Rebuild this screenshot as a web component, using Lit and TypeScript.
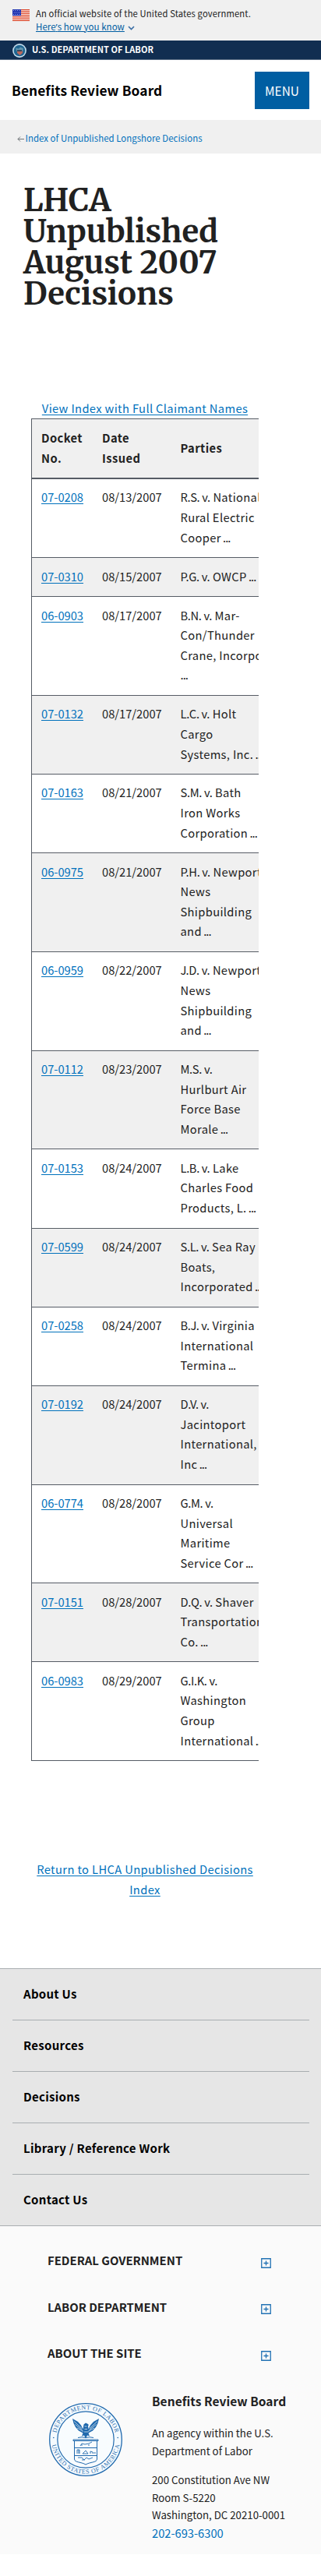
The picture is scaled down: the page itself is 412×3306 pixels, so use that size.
import { LitElement, html, css, svg } from "lit";

interface Decision {
  docket: string;
  issued: string;
  parties: string[];
}

const DECISIONS: Decision[] = [
  { docket: "07-0208", issued: "08/13/2007", parties: ["R.S. v. National", "Rural Electric", "Cooper ..."] },
  { docket: "07-0310", issued: "08/15/2007", parties: ["P.G. v. OWCP ..."] },
  { docket: "06-0903", issued: "08/17/2007", parties: ["B.N. v. Mar-", "Con/Thunder", "Crane, Incorpo", "..."] },
  { docket: "07-0132", issued: "08/17/2007", parties: ["L.C. v. Holt", "Cargo", "Systems, Inc. ..."] },
  { docket: "07-0163", issued: "08/21/2007", parties: ["S.M. v. Bath", "Iron Works", "Corporation ..."] },
  { docket: "06-0975", issued: "08/21/2007", parties: ["P.H. v. Newport", "News", "Shipbuilding", "and ..."] },
  { docket: "06-0959", issued: "08/22/2007", parties: ["J.D. v. Newport", "News", "Shipbuilding", "and ..."] },
  { docket: "07-0112", issued: "08/23/2007", parties: ["M.S. v.", "Hurlburt Air", "Force Base", "Morale ..."] },
  { docket: "07-0153", issued: "08/24/2007", parties: ["L.B. v. Lake", "Charles Food", "Products, L. ..."] },
  { docket: "07-0599", issued: "08/24/2007", parties: ["S.L. v. Sea Ray", "Boats,", "Incorporated ..."] },
  { docket: "07-0258", issued: "08/24/2007", parties: ["B.J. v. Virginia", "International", "Termina ..."] },
  { docket: "07-0192", issued: "08/24/2007", parties: ["D.V. v.", "Jacintoport", "International,", "Inc ..."] },
  { docket: "06-0774", issued: "08/28/2007", parties: ["G.M. v.", "Universal", "Maritime", "Service Cor ..."] },
  { docket: "07-0151", issued: "08/28/2007", parties: ["D.Q. v. Shaver", "Transportation", "Co. ..."] },
  { docket: "06-0983", issued: "08/29/2007", parties: ["G.I.K. v.", "Washington", "Group", "International ..."] },
];

const NAV = ["About Us", "Resources", "Decisions", "Library / Reference Work", "Contact Us"];
const GROUPS = ["FEDERAL GOVERNMENT", "LABOR DEPARTMENT", "ABOUT THE SITE"];

class AppRoot extends LitElement {
  static styles = css`
    :host { display: block; background: #fff; color: #212121; overflow: hidden;
      font-family: "Noto Sans CJK SC", "Noto Sans", sans-serif; font-size: 14.7px; line-height: 25.6px; }
    * { box-sizing: border-box; }
    a { color: #0071bc; text-decoration: underline; text-decoration-thickness: 1px; text-underline-offset: 2px; }
    .banner { background: #f0f0f0; height: 52px; padding: 8.6px 16px 0; display: flex; gap: 8px; font-size: 11.2px; line-height: 17px; letter-spacing: .14px; }
    .flag { width: 22px; height: 15px; margin-top: 3.4px; display: block; }
    .know { font-size: 11.5px; letter-spacing: .04px; text-underline-offset: 1px; color: #005ea2; }
    .apos { font-family: "Noto Sans", sans-serif; }
    .chev { width: 9px; height: 6px; margin-left: 4px; }
    .dol { background: #112e51; height: 25px; border-bottom: 1px solid #5d6f86; padding: 0 16px; display: flex; align-items: center; gap: 7px; color: #fff; font-weight: 700; font-size: 11px; line-height: 22px; letter-spacing: .04px; }
    .dol span { padding-bottom: 2px; }
    .dol svg { width: 18px; height: 18px; margin-top: 1px; }
    .head { height: 77px; padding: 0 15px 0 15px; display: flex; align-items: center; justify-content: space-between; color: #000; font-weight: 700; font-size: 17.3px; letter-spacing: .13px; }
    .menu { width: 70px; height: 48px; border: 0; padding: 0; background: #005ea2; color: #fff; font: 400 15.4px/46px "Noto Sans CJK SC", sans-serif; }
    .crumb { background: #f0f0f0; height: 43px; padding: 13.4px 22px 0; display: flex; gap: 1.5px; align-items: flex-start; font-size: 11.4px; line-height: 20px; letter-spacing: .05px; }
    .crumb a { text-decoration: none; }
    .crumb svg { width: 9px; height: 9px; margin-top: 7px; }
    h1 { margin: 0; padding: 40px 100px 0 30px; font: 700 40px/40px Merriweather, "Noto Serif", serif; color: #212121; }
    .main { width: 292px; margin: 113.5px 0 0 40px; overflow: hidden; }
    .view { text-align: center; letter-spacing: .36px; display: block; margin-bottom: 1px; }
    .table { width: 330px; border-left: 1px solid #565c65; border-top: 1px solid #565c65; }
    .row { display: grid; grid-template-columns: 78px 100.5px 1fr; padding: 10.4px 0 12.97px 12px; border-bottom: 1px solid #565c65; }
    .row:nth-child(odd) { background: #f0f0f0; }
    .row.top { height: 77px; padding: 11px 0 0 12px; border-bottom: 2px solid #565c65; font-weight: 700; letter-spacing: .43px; }
    .top .mid { padding-top: 12.8px; }
    .party { letter-spacing: .35px; white-space: nowrap; }
    .party div { height: 25.6px; }
    .initials { letter-spacing: -.35px; }
    .dots { letter-spacing: -.95px; }
    .return { width: 292px; margin: 126px 0 0 40px; text-align: center; line-height: 26px; letter-spacing: .38px; }
    .nav { margin-top: 88.3px; background: #e6e6e6; border-top: 1px solid #a9aeb1; border-bottom: 1px solid #a9aeb1; padding: 0 15px 0 16px; color: #000; font-weight: 700; font-size: 15px; letter-spacing: .28px; }
    .item { height: 66px; line-height: 64px; padding-left: 14px; border-bottom: 1px solid #a9aeb1; }
    .item:last-child { border: 0; height: 65px; }
    .foot { background: #fafafa; padding: 14px 0 16px; }
    .group { height: 59.5px; display: flex; align-items: center; justify-content: space-between; padding: 0 64px 0 61px; font-weight: 700; font-size: 14.9px; }
    .group svg { width: 13px; height: 13px; margin-top: 6px; }
    .org { display: flex; margin-top: 19.5px; padding-left: 63px; }
    .seal { width: 94px; height: 94px; margin: 15px 38px 0 0; flex: none; }
    .name { font-weight: 700; font-size: 15.5px; line-height: 25px; letter-spacing: .06px; }
    .addr { font-size: 13.24px; line-height: 22.5px; }
    .agency { margin: 18px 0 15px; }
    .phone { line-height: 22.5px; text-decoration: none; display: block; }
    .ring { font: 400 8px "Liberation Serif", serif; fill: #2f6fae; }
  `;

  flag() {
    return svg`<svg class="flag" viewBox="0 0 22 15"><rect width="22" height="15" fill="#fff"/>
      ${[0, 1, 2, 3, 4, 5, 6].map((i) => svg`<rect y=${i * 2.3} width="22" height="1.25" fill="#db3e1f"/>`)}
      <rect width="11" height="8.2" fill="#1e33b1"/>
      ${[1.5, 4, 6.5].map((y, r) => [1.5, 4, 6.5, 9].map((x) => svg`<circle cx=${x + (r % 2 ? 0.6 : 0)} cy=${y} r=".5" fill="#cdd5f5"/>`))}</svg>`;
  }

  seal() {
    return svg`<svg class="seal" viewBox="0 0 94 94" fill="none" stroke="#2069ad">
      <circle cx="47" cy="47" r="46.3" stroke-width="1.3" fill="#f4fafe"/><circle cx="47" cy="47" r="36.2" stroke-width="1.2" fill="#f8fcfe"/>
      <defs><path id="upper" d="M8.300 47a38.700 38.700 0 0 1 77.400 0"/><path id="lower" d="M3.200 47a43.800 43.800 0 0 0 87.600 0"/></defs>
      <g stroke="none"><text class="ring" text-anchor="middle"><textPath href="#upper" startOffset="50%" textLength="104">DEPARTMENT OF LABOR</textPath></text>
      <text class="ring" text-anchor="middle"><textPath href="#lower" startOffset="50%" textLength="124">UNITED STATES OF AMERICA</textPath></text></g>
      <g fill="#2069ad" stroke="none"><circle cx="5.8" cy="44.5" r=".8"/><circle cx="88.200" cy="44.5" r=".8"/>
      <path d="M30 20l7 4 4 4.500 2.500 5 1-6 2.500-2 3 1.500 1 1.500-1 .5.500 4.500 2.500-5 4-4.500 7-4-1.500 6-2.500 5-4 4.500-5.500 3 1.500 4-3-1-2 4-2-4-3 1 1.500-4-5.500-3-4-4.500-2.500-5z"/></g>
      <path stroke="#f4fafe" stroke-width=".7" d="M32 23.500l10 9M33.500 27.500l9 7M36 32l8 4.500M62 23.500l-10 9M60.500 27.500l-9 7M58 32l-8 4.500M45.500 30h3M45.500 33.500h3.500M45 37h5"/>
      <path stroke-width="1" d="M37 44.500q5-1.500 10 0 5-1.500 10 0M31 47h32v1.500H31zM32.500 49V72c0 4.500 9 3.500 14.500 7 5.500-3.500 14.500-2.500 14.500-7V49M32.500 57.500h29M32.500 67.500h29"/>
      <path stroke-width=".9" d="M40 55l2-3 4 1 5-1 4-2M42 55v-2M51 55v-2M36 65v-5h3v5M38 60v5M43 65l4-4 3 4zM53 65v-3l3 1v2M57 64h3M37 70h5l3 3 3-3 3 2 5-2M42 73h4"/></svg>`;
  }

  party(line: string) {
    const [, initials = "", name = "", dots = ""] = line.match(/^([A-Z.]+ v\.)?(.*?)( ?\.\.\.)?$/) ?? [];
    return html`<div>${initials ? html`<span class="initials">${initials}</span>` : ""}${name}${dots ? html`<span class="dots">${dots}</span>` : ""}</div>`;
  }

  render() {
    return html`
      <div class="banner">${this.flag()}<div><div>An official website of the United States government.</div>
        <a class="know">Here<span class="apos">’</span>s how you know</a><svg class="chev" viewBox="0 0 9 6"><path d="M1 1l3.500 3.500L8 1" fill="none" stroke="#3b6ea5" stroke-width="1.600"/></svg></div></div>
      <div class="dol"><svg viewBox="0 0 18 18"><circle cx="9" cy="9" r="8.900" fill="#c5dcec"/><circle cx="9" cy="9" r="7.300" fill="#1f6590"/><path d="M4 5.500l4 1 2-2 4 1.500-1 5H6z" fill="#6395ae"/><path d="M6 9.500h7v2.500l-3.500 3-3.500-3z" fill="#b9675d"/><path d="M6 8h6v2H6z" fill="#34495e"/></svg><span>U.S. DEPARTMENT OF LABOR</span></div>
      <div class="head"><span>Benefits Review Board</span><button class="menu">MENU</button></div>
      <div class="crumb"><svg viewBox="0 0 9 9"><path d="M9 4.500H1M4 1.500l-3 3 3 3" fill="none" stroke="#71767a" stroke-width="1"/></svg><a>Index of Unpublished Longshore Decisions</a></div>
      <h1>LHCA Unpublished August 2007 Decisions</h1>
      <div class="main"><a class="view">View Index with Full Claimant Names</a>
        <div class="table">
          <div class="row top"><div>Docket<br>No.</div><div>Date<br>Issued</div><div class="mid">Parties</div></div>
          ${DECISIONS.map((d) => html`<div class="row"><div><a>${d.docket}</a></div><div>${d.issued}</div><div class="party">${d.parties.map((p) => this.party(p))}</div></div>`)}
        </div></div>
      <div class="return"><a>Return to LHCA Unpublished Decisions Index</a></div>
      <div class="nav">${NAV.map((n) => html`<div class="item">${n}</div>`)}</div>
      <div class="foot">
        ${GROUPS.map((g) => html`<div class="group"><span>${g}</span><svg viewBox="0 0 13 13"><path d="M.75.750h11.500v11.500H.75zM6.500 3.500v6M3.500 6.500h6" fill="none" stroke="#2272b4" stroke-width="1.300"/></svg></div>`)}
        <div class="org">${this.seal()}<div><div class="name">Benefits Review Board</div>
          <div class="addr agency">An agency within the U.S.<br>Department of Labor</div>
          <div class="addr">200 Constitution Ave NW<br>Room S-5220<br>Washington, DC 20210-0001</div>
          <a class="phone">202-693-6300</a></div></div>
      </div>`;
  }
}
customElements.define("app-root", AppRoot);
